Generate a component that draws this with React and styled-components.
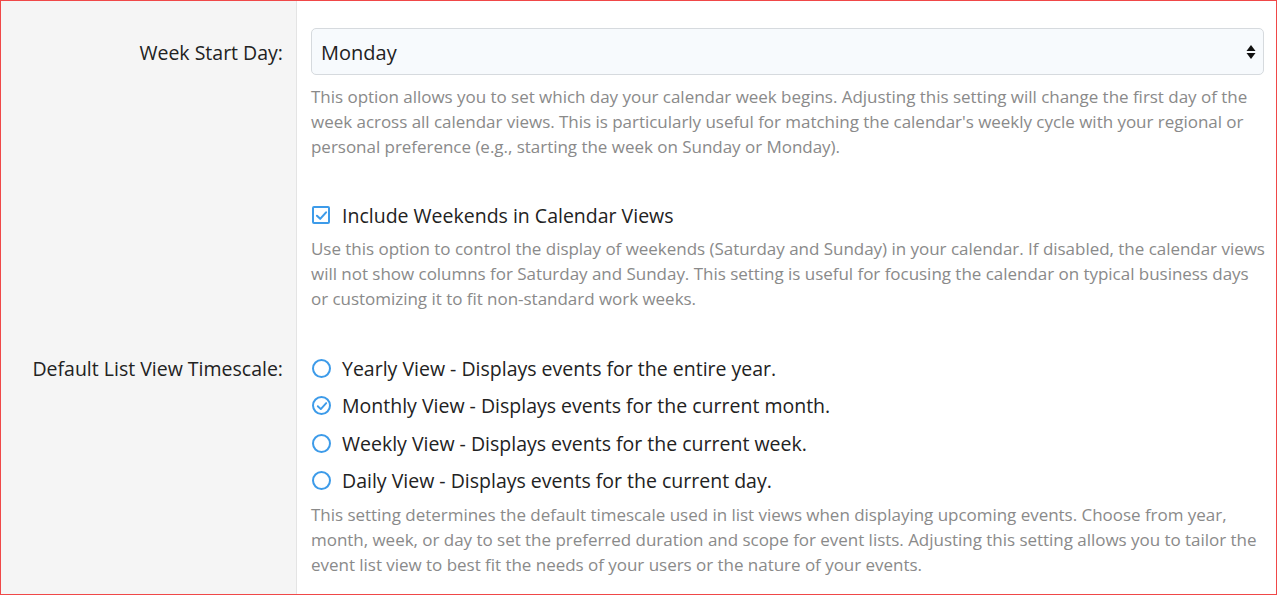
import React from "react";
import styled, { createGlobalStyle } from "styled-components";

const Global = createGlobalStyle`
  html, body { margin: 0; padding: 0; background: #fff; }
  body { font-family: "Open Sans", "Noto Sans", sans-serif; }
  * { box-sizing: border-box; }
`;

const Frame = styled.div`
  width: 1277px;
  height: 595px;
  border: 1px solid #f04848;
  overflow: hidden;
  display: grid;
  grid-template-columns: 296px 1fr;
  grid-template-rows: auto auto 1fr;
`;

const LabelCell = styled.div`
  background: #f5f5f5;
  border-right: 1px solid #e4e4e4;
  padding: ${(p) => p.$top}px 13px 0 0;
  text-align: right;
  font-size: 19.5px;
  line-height: 30px;
  color: #222;
`;

const Content = styled.div`
  padding: ${(p) => p.$top}px 12px 0 14px;
`;

const SelectBox = styled.div`
  height: 47px;
  border: 1px solid #d6dade;
  border-radius: 5px;
  background: #f7fafd;
  display: flex;
  align-items: center;
  justify-content: space-between;
  padding: 1px 7px 0 9px;
  font-size: 20px;
  color: #222;
`;

const Help = styled.p`
  margin: ${(p) => p.$mt}px -2px 0 0;
  font-size: 17px;
  line-height: 25px;
  letter-spacing: -0.03px;
  color: #8a8a8a;
`;

const OptionRow = styled.label`
  display: flex;
  align-items: center;
  gap: 11px;
  height: ${(p) => p.$h}px;
  font-size: 19.5px;
  color: #222;
  padding-left: 1px;
`;

const Box = styled.span`
  width: 18px;
  height: 18px;
  margin-right: 1px;
  border: 2px solid #3d9be9;
  border-radius: 2px;
  display: inline-flex;
  align-items: center;
  justify-content: center;
  flex: none;
`;

const Circle = styled.span`
  width: 19px;
  height: 19px;
  border: 2px solid #3d9be9;
  border-radius: 50%;
  display: inline-flex;
  align-items: center;
  justify-content: center;
  flex: none;
`;

const Check = ({ size = 12 }) => (
  <svg width={size} height={size} viewBox="0 0 12 12">
    <path d="M1.8 6.2 L4.8 9.1 L10.2 3.1" fill="none" stroke="#3d9be9" strokeWidth="1.9" strokeLinecap="round" strokeLinejoin="round" />
  </svg>
);

const Arrows = () => (
  <svg width="10" height="16" viewBox="0 0 10 16">
    <path d="M5 1 L9.5 7 H0.5 Z" fill="#111" />
    <path d="M5 15 L9.5 9 H0.5 Z" fill="#111" />
  </svg>
);

const options = [
  { t: "Yearly View - Displays events for the entire year.", c: false },
  { t: "Monthly View - Displays events for the current month.", c: true },
  { t: "Weekly View - Displays events for the current week.", c: false },
  { t: "Daily View - Displays events for the current day.", c: false },
];

export default function App() {
  return (
    <>
      <Global />
      <Frame>
        <LabelCell $top={37}>Week Start Day:</LabelCell>
        <Content $top={27}>
          <SelectBox>
            <span>Monday</span>
            <Arrows />
          </SelectBox>
          <Help $mt={9}>
            This option allows you to set which day your calendar week begins. Adjusting this setting will change the first day of the week across all calendar views. This is particularly useful for matching the calendar's weekly cycle with your regional or personal preference (e.g., starting the week on Sunday or Monday).
          </Help>
        </Content>

        <LabelCell $top={0} />
        <Content $top={41}>
          <OptionRow $h={30}>
            <Box><Check size={13} /></Box>
            Include Weekends in Calendar Views
          </OptionRow>
          <Help $mt={6}>
            Use this option to control the display of weekends (Saturday and Sunday) in your calendar. If disabled, the calendar views will not show columns for Saturday and Sunday. This setting is useful for focusing the calendar on typical business days or customizing it to fit non-standard work weeks.
          </Help>
        </Content>

        <LabelCell $top={43}>Default List View Timescale:</LabelCell>
        <Content $top={39}>
          {options.map((o) => (
            <OptionRow key={o.t} $h={37.3}>
              <Circle>{o.c && <Check size={12} />}</Circle>
              {o.t}
            </OptionRow>
          ))}
          <Help $mt={3}>
            This setting determines the default timescale used in list views when displaying upcoming events. Choose from year, month, week, or day to set the preferred duration and scope for event lists. Adjusting this setting allows you to tailor the event list view to best fit the needs of your users or the nature of your events.
          </Help>
        </Content>
      </Frame>
    </>
  );
}
